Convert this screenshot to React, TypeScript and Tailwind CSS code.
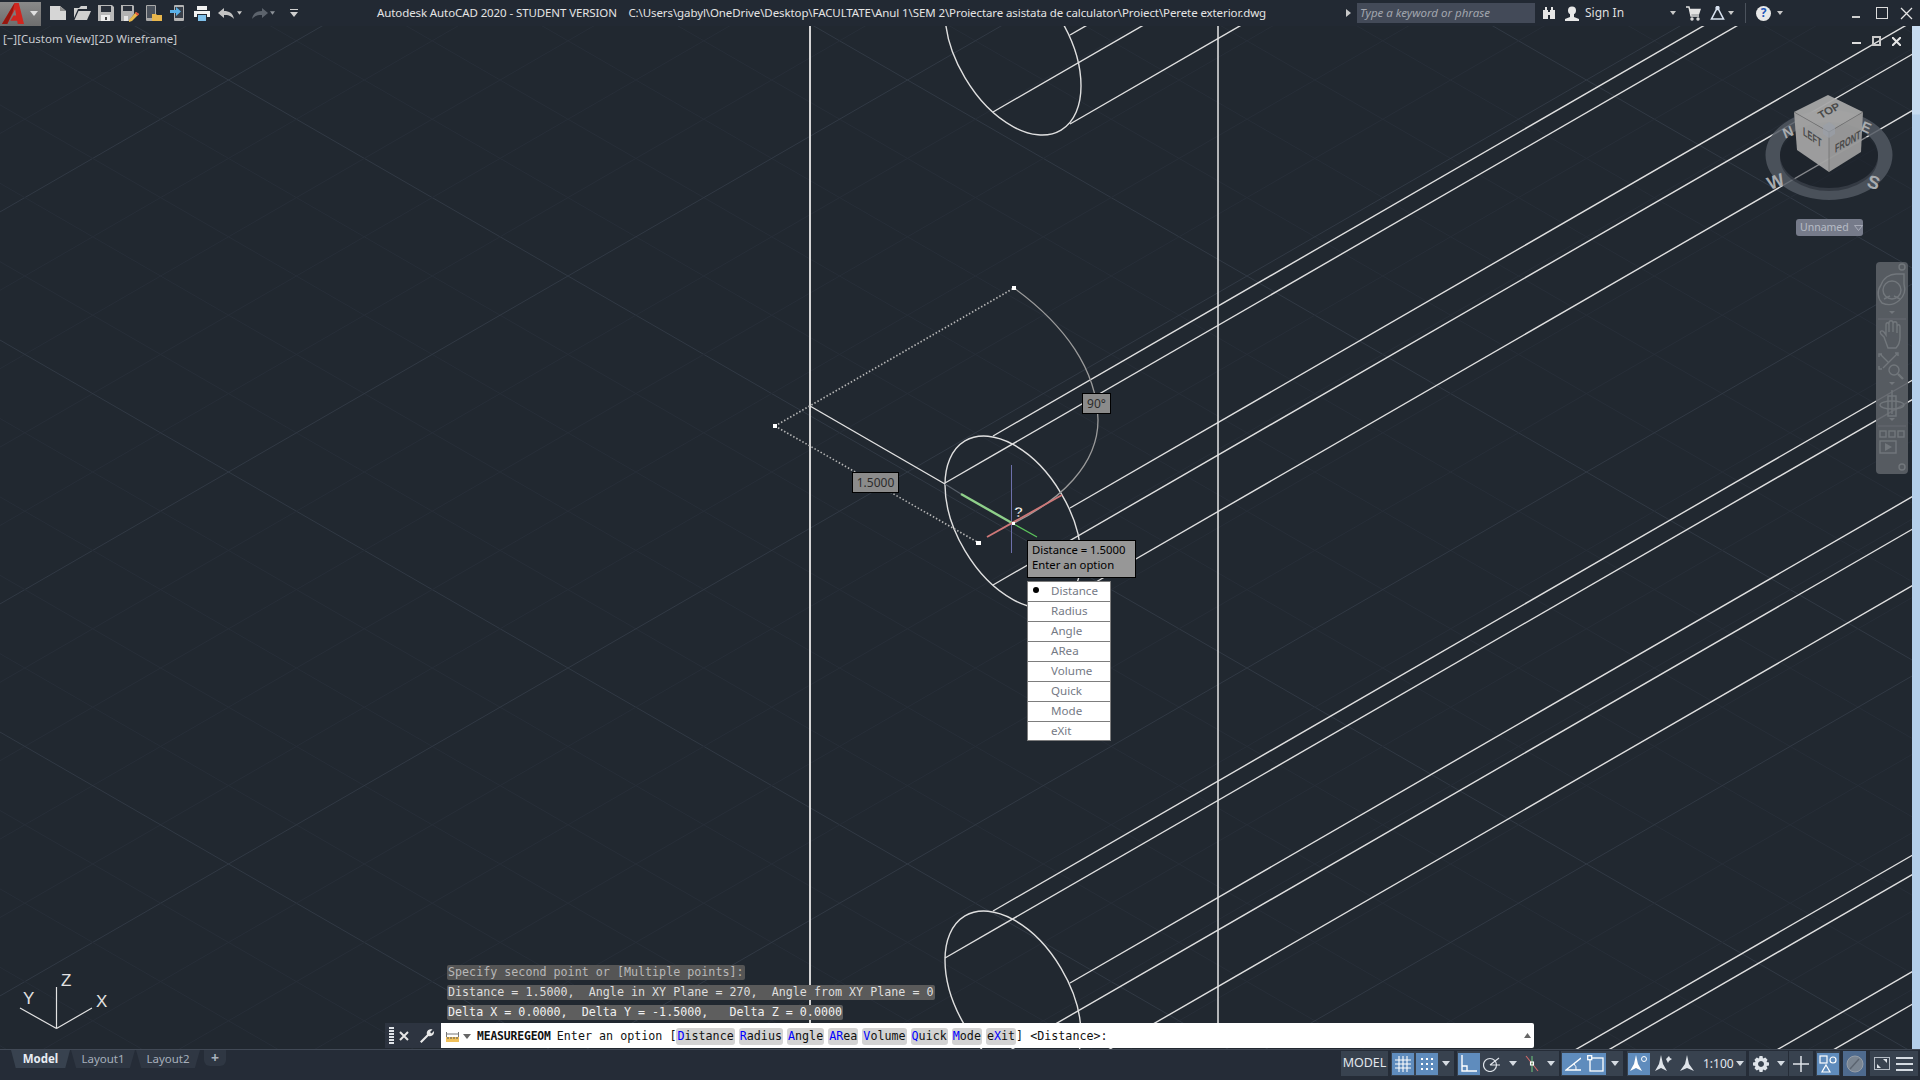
import React from 'react';

const UI = { fontFamily: '"Noto Sans", "Open Sans", sans-serif' };
const MONO = { fontFamily: '"DejaVu Sans Mono", "Liberation Mono", monospace' };

const SLOPE = Math.tan(Math.PI / 6);

// drafting grid, major every 5th line
function gridLines() {
  const out: React.ReactNode[] = [];
  const baseY = 472 - 228.5 * SLOPE;
  const baseY2 = 472 + 228.5 * SLOPE;
  for (let i = -30; i < 60; i++) {
    const major = i % 5 === 0;
    const stroke = major ? '#313944' : '#272e38';
    const a = baseY + i * 78.4;
    const b = baseY2 + i * 78.4;
    out.push(<line key={`a${i}`} x1={0} y1={a} x2={1920} y2={a + 1920 * SLOPE} stroke={stroke} strokeWidth={1} />);
    out.push(<line key={`b${i}`} x1={0} y1={b} x2={1920} y2={b - 1920 * SLOPE} stroke={stroke} strokeWidth={1} />);
  }
  return out;
}

const centers = [49, 522, 997, 1472];
const starts: [number, number][] = [[-20, -86], [-68, -39], [57, -14], [-20, 63], [57, 75]];

function Pipes() {
  return (
    <g stroke="#e0e0e0" strokeWidth={1.4} fill="none">
      {centers.map(cy => (
        <g key={cy}>
          {cy < 1400 && (
            <ellipse cx={0} cy={0} rx={1} ry={1} transform={`matrix(68 37 0 77.6 1013 ${cy})`} vectorEffect="non-scaling-stroke" />
          )}
          {starts.map(([dx, dy], i) => {
            const x = 1013 + dx;
            const y = cy + dy;
            return <line key={i} x1={x} y1={y} x2={1914} y2={y - (1914 - x) * SLOPE} />;
          })}
        </g>
      ))}
    </g>
  );
}

function Drawing() {
  return (
    <svg className="absolute inset-0" width={1920} height={1023} viewBox="0 26 1920 1023">
      {gridLines()}
      <Pipes />
      <line x1={810} y1={26} x2={810} y2={1023} stroke="#d4d4d4" strokeWidth={2} />
      <line x1={1218} y1={26} x2={1218} y2={1023} stroke="#e4e4e4" strokeWidth={1.5} />
      <line x1={810} y1={406} x2={945} y2={484} stroke="#e2e2e2" strokeWidth={1.4} />
      <line x1={945} y1={484} x2={961} y2={494} stroke="#59606a" strokeWidth={1.2} />
      <path d="M775 426 L1014 288 M775 426 L979 543" stroke="#b5b5b5" strokeWidth={1.6} strokeDasharray="1.5 2" fill="none" />
      <path d="M1014 288 C1065 325 1097 370 1098 420 C1098 465 1060 500 1014 523" stroke="#9b9b9b" strokeWidth={1.3} fill="none" />
      <rect x={1012} y={286} width={4} height={4} fill="#fff" />
      <rect x={773} y={424} width={4} height={4} fill="#fff" />
      <rect x={976} y={541} width={5} height={4} fill="#fff" />
      {/* crosshair */}
      <line x1={1011.5} y1={465} x2={1011.5} y2={553} stroke="#6d70ab" strokeWidth={1} />
      <line x1={961} y1={494} x2={1012} y2={523} stroke="#8fd08a" strokeWidth={2.4} />
      <line x1={1012} y1={523} x2={1037} y2={537} stroke="#5cc45c" strokeWidth={1.2} />
      <line x1={1062} y1={495} x2={987} y2={537} stroke="#cf7878" strokeWidth={1.8} />
      <rect x={1012} y={522} width={3} height={3} fill="#fff" />
      <text x={1014} y={517} fontSize={15} fontWeight={700} fill="#fff" stroke="#000" strokeWidth={0.4} style={{ fontFamily: '"Liberation Sans", sans-serif' }}>?</text>
      {/* UCS */}
      <path d="M56.500 1028.500 L56.500 987 M56.500 1028.500 L20 1008 M56.500 1028.500 L92 1008" stroke="#e2e2e2" strokeWidth={1.2} fill="none" />
      <g fill="#e2e2e2" fontSize={17} style={{ fontFamily: '"Liberation Sans", sans-serif' }}>
        <text x={61} y={986}>Z</text>
        <text x={23} y={1004}>Y</text>
        <text x={96} y={1007}>X</text>
      </g>
    </svg>
  );
}

function ViewCube() {
  const faceFont = { fontFamily: '"Liberation Sans", sans-serif' };
  return (
    <svg className="absolute left-[1760px] top-[60px]" width={140} height={130} viewBox="1760 86 140 130">
      <path fillRule="evenodd" d="M1765.500 155 a63.500 45 0 1 0 127 0 a63.500 45 0 1 0 -127 0 Z M1780 155 a49 33 0 1 0 98 0 a49 33 0 1 0 -98 0 Z" fill="#515861" fillOpacity={0.85} />
      <ellipse cx={1829} cy={158} rx={49} ry={33} fill="#1b2027" fillOpacity={0.45} />
      <g fill="#a9acaf" fontWeight={700} style={faceFont}>
        <text fontSize={19} transform="matrix(.88 -.3 .35 .9 1770 190)">W</text>
        <text fontSize={19} transform="matrix(.9 .35 -.3 .9 1866 186)">S</text>
        <text fontSize={15} transform="matrix(.88 -.4 .35 .9 1785 139)">N</text>
        <text fontSize={15} transform="matrix(.88 .4 -.35 .9 1860 130)">E</text>
      </g>
      <g fillOpacity={0.95}>
        <path d="M1828 95 L1863 112 L1829 132 L1794 112 Z" fill="#a7a7a7" />
        <path d="M1794 112 L1829 132 L1829 172 L1797 150 Z" fill="#a3a3a3" />
        <path d="M1863 112 L1861 152 L1829 172 L1829 132 Z" fill="#9c9c9c" />
      </g>
      <path d="M1794 112 L1829 132 L1863 112 M1829 132 L1829 172" stroke="#6f6f6f" strokeWidth={0.7} fill="none" />
      <path d="M1823 126 L1829 122 L1835 126 L1835 134 L1829 138 L1823 134 Z" fill="#9aa0a8" fillOpacity={0.7} />
      <g fill="#4a4a4a" fontWeight={700} style={faceFont}>
        <text fontSize={11} transform="matrix(.9 -.48 .55 .8 1821 119)">TOP</text>
        <text fontSize={12} transform="matrix(.62 .42 0 1 1803 135)">LEFT</text>
        <text fontSize={12} transform="matrix(.62 -.36 0 1 1835 153)">FRONT</text>
      </g>
    </svg>
  );
}

function NavBar() {
  return (
    <div className="absolute left-[1876px] top-[236px] w-[32px] h-[212px] rounded-[4px] bg-[#5c6167]/90 flex flex-col items-center">
      <svg width={32} height={212} viewBox="0 0 32 212" fill="none" stroke="#72777c" strokeWidth={1.4}>
        <circle cx={26} cy={5} r={3} />
        <path d="M5 23 a16 16 0 0 1 16 -11 h7 v10 a16 16 0 0 1 -22 19 a14 14 0 0 1 -1 -18 Z" />
        <circle cx={16} cy={28} r={9} />
        <path d="M8 37 l6 -3 M24 37 l-6 -3" />
        <path d="M13 49 l3 3 l3 -3 Z" fill="#72777c" stroke="none" />
        <line x1={2} y1={57} x2={30} y2={57} strokeWidth={0.6} />
        <path d="M8 75 l-3 -3 c-2 -3 1 -4 3 -2 l2 3 v-10 c0 -3 3 -3 3 0 v7 v-9 c0 -3 4 -3 4 0 v9 v-8 c0 -3 4 -3 4 0 v9 v-6 c0 -3 3 -3 3 0 v10 c0 6 -2 9 -4 11 h-8 Z" />
        <path d="M4 92 l8 8 M21 92 l-14 14 M6 92 h-3 v3 M19 91 h3 v3 M3 104 v3 h3" />
        <circle cx={18} cy={108} r={5} />
        <path d="M22 112 l5 5" strokeWidth={2.4} />
        <path d="M13 120 l3 3 l3 -3 Z" fill="#72777c" stroke="none" />
        <path d="M16 128 v24 M12 134 h8 v20 h-8 Z" />
        <ellipse cx={16} cy={143} rx={12} ry={4} />
        <path d="M13 156 l3 3 l3 -3 Z" fill="#72777c" stroke="none" />
        <line x1={2} y1={164} x2={30} y2={164} strokeWidth={0.6} />
        <rect x={4} y={169} width={6} height={6} />
        <rect x={13} y={169} width={6} height={6} />
        <rect x={22} y={169} width={6} height={6} />
        <rect x={4} y={179} width={16} height={12} />
        <path d="M9 181 l7 4 l-7 4 Z" fill="#72777c" stroke="none" />
        <circle cx={26} cy={205} r={3} />
      </svg>
    </div>
  );
}

const menuItems = ['Distance', 'Radius', 'Angle', 'ARea', 'Volume', 'Quick', 'Mode', 'eXit'];

function DynamicInput() {
  return (
    <>
      <div className="absolute left-[852px] top-[446px] w-[47px] h-[21px] bg-[#8b8b8b] border border-black flex items-center justify-center text-[12px] text-[#2b2b2b]" style={UI}>1.5000</div>
      <div className="absolute left-[1082px] top-[367px] w-[29px] h-[21px] bg-[#8b8b8b] border border-black flex items-center justify-center text-[12px] text-[#2b2b2b]" style={UI}>90°</div>
      <div className="absolute left-[1027px] top-[514px] w-[109px] h-[38px] bg-[#979797] border border-black pl-[4px] text-[11.3px] leading-[15px] pt-[1px] text-black" style={UI}>
        <div>Distance = 1.5000</div>
        <div>Enter an option</div>
      </div>
      <div className="absolute left-[1027px] top-[555px] w-[84px] bg-white border border-[#7d7d7d] text-[11.6px] text-[#757a85]" style={UI}>
        {menuItems.map((item, i) => (
          <div key={item} className={`relative pl-[23px] pb-[1px] flex items-center ${i < menuItems.length - 1 ? 'h-[20px] border-b border-[#7d7d7d]' : 'h-[18px]'}`}>
            {i === 0 && <span className="absolute left-[5px] top-[5px] w-[6px] h-[6px] rounded-full bg-black" />}
            {item}
          </div>
        ))}
      </div>
    </>
  );
}

const Opt = ({ hot, pre = '', rest = '' }: { hot: string; pre?: string; rest?: string }) => (
  <span className="inline-block h-[17px] leading-[17px] px-[1px] mr-[4px] bg-[#d3d3d3] rounded-[3px]">
    {pre}<span className="text-[#0000ff]">{hot}</span>{rest}
  </span>
);

function CommandLine() {
  return (
    <div className="absolute left-[385px] bottom-[1px] w-[1149px] flex flex-col" style={MONO}>
      <div className="pl-[62px] flex flex-col gap-[5px] text-[11.7px] leading-[15px] mb-[3px]">
        <div className="w-fit pr-[1px] pl-[1px] rounded-[2px] bg-[#555555] text-[#b8b8b8] whitespace-pre">Specify second point or [Multiple points]:</div>
        <div className="w-fit pr-[1px] pl-[1px] rounded-[2px] bg-[#5a5a5a] text-[#dedede] whitespace-pre">Distance = 1.5000,  Angle in XY Plane = 270,  Angle from XY Plane = 0</div>
        <div className="w-fit pr-[1px] pl-[1px] rounded-[2px] bg-[#5e5e5e] text-[#f0f0f0] whitespace-pre">Delta X = 0.0000,  Delta Y = -1.5000,   Delta Z = 0.0000</div>
      </div>
      <div className="flex h-[25px]">
        <div className="w-[56px] bg-[#2d3440] flex items-center relative">
          <div className="ml-[4px] w-[5px] h-[17px] bg-[repeating-linear-gradient(0deg,#dfe3e8_0px,#dfe3e8_2px,transparent_2px,transparent_3px)]" />
          <svg className="ml-[4px]" width={12} height={12} viewBox="0 0 12 12" stroke="#e6e6e6" strokeWidth={2}><path d="M2 2 L10 10 M10 2 L2 10" /></svg>
          <svg className="ml-[9px]" width={16} height={16} viewBox="0 0 16 16" fill="#e8e8e8"><path d="M1 13.500 L8 6.500 C7 3 10 .5 13.500 1.500 L11 4 L12.500 5.500 L15 3 C15.500 6.500 13 9 9.500 8 L2.500 15 Z" /></svg>
        </div>
        <div className="flex-1 bg-white rounded-r-[2px] flex items-center relative pt-[2px] text-[11.7px] text-[#111] whitespace-pre">
          <svg className="ml-[5px]" width={13} height={10} viewBox="0 0 13 10">
            <path d="M.5 0 V6 M12.500 0 V6 M.5 2 H12.500" stroke="#777" strokeWidth={1} fill="none" />
            <rect x={0} y={5} width={13} height={5} fill="#f0c05a" />
            <path d="M2 5 v2 M5 5 v2 M8 5 v2 M11 5 v2" stroke="#555" />
          </svg>
          <svg className="ml-[4px]" width={8} height={5} viewBox="0 0 8 5" fill="#666"><path d="M0 0 H8 L4 5 Z" /></svg>
          <span className="ml-[6px] font-bold tracking-[-0.15px] text-[11.4px]">MEASUREGEOM</span>
          <span className="ml-[6px]">Enter an option [</span>
          <Opt hot="D" rest="istance" />
          <Opt hot="R" rest="adius" />
          <Opt hot="A" rest="ngle" />
          <Opt hot="AR" rest="ea" />
          <Opt hot="V" rest="olume" />
          <Opt hot="Q" rest="uick" />
          <Opt hot="M" rest="ode" />
          <span className="inline-block h-[17px] leading-[17px] px-[1px] bg-[#d3d3d3] rounded-[3px]">e<span className="text-[#0000ff]">X</span>it</span>
          <span>] &lt;Distance&gt;:</span>
          <svg className="absolute right-[3px] top-[10px]" width={7} height={5} viewBox="0 0 7 5" fill="#666"><path d="M3.500 0 L7 5 H0 Z" /></svg>
        </div>
      </div>
    </div>
  );
}

/* ---- quick access toolbar ---- */
const Tb = ({ children, w = 'w-[24px]' }: { children: React.ReactNode; w?: string }) => (
  <div className={`${w} h-[26px] flex items-center justify-center shrink-0`}>{children}</div>
);

const TinyCaret = ({ color = '#c9c9c9' }: { color?: string }) => (
  <svg width={6} height={4} viewBox="0 0 6 4" fill={color}><path d="M0 0 H6 L3 4 Z" /></svg>
);

function QuickAccess() {
  return (
    <div className="flex items-center shrink-0">
      <div className="w-[41px] h-[24px] mt-[1px] bg-[linear-gradient(#8a8a8a,#6e6e6e)] flex items-center relative">
        <svg className="ml-[2px]" width={22} height={21} viewBox="0 0 21 20">
          <path d="M0 20 L12 0 H16 L21 20 H15 L14.500 17 H8 L11 12 H13.500 L12.500 6 L5 20 Z" fill="#d0261f" />
          <path d="M0 20 L12 0 L10 9 L5 20 Z" fill="#96170f" />
        </svg>
        <svg className="ml-[6px]" width={8} height={5} viewBox="0 0 8 5" fill="#e0e0e0"><path d="M0 0 H8 L4 5 Z" /></svg>
      </div>
      <div className="w-[5px]" />
      <Tb><svg width={16} height={14} viewBox="0 0 16 14" fill="#d6d6d6"><path d="M0 0 H10 L16 5 V14 H0 Z" /><path d="M10 0 V5 H16" fill="#8f8f8f" /></svg></Tb>
      <Tb><svg width={17} height={14} viewBox="0 0 17 14" fill="#cfcfcf"><path d="M0 2 H5 L7 0 H13 V3 H4 L0 12 Z" /><path d="M4.500 5 H17 L13 14 H.5 Z" /></svg></Tb>
      <Tb><svg width={16} height={16} viewBox="0 0 16 16"><path d="M0 0 H14 L16 2 V16 H0 Z" fill="#b9b9b9" /><rect x={3} y={1} width={10} height={6} fill="#2a303a" /><rect x={3} y={10} width={9} height={6} fill="#eee" /><rect x={7} y={12} width={2} height={3} fill="#444" /></svg></Tb>
      <Tb><svg width={18} height={17} viewBox="0 0 18 17"><path d="M0 0 H12 L13 1 V9 L8 16 H0 Z" fill="#b3b3b3" /><rect x={2} y={1} width={9} height={5} fill="#2a303a" /><rect x={3} y={11} width={4} height={5} fill="#e6e6e6" /><path d="M8 15 L15 7 L18 9 L11 16 L8 17 Z" fill="#e8b94a" /><path d="M14 8 L15 7 L18 9 L16.500 11 Z" fill="#e0503a" /></svg></Tb>
      <Tb><svg width={16} height={16} viewBox="0 0 16 16"><rect x={0} y={0} width={10} height={16} rx={1} fill="#aaaaaa" /><rect x={1} y={1} width={8} height={12} fill="#4b525c" /><path d="M6 9 H10 L11 10 H16 V16 H6 Z" fill="#e8b64c" /></svg></Tb>
      <Tb><svg width={16} height={16} viewBox="0 0 16 16"><rect x={4} y={0} width={10} height={16} rx={1} fill="#b3b3b3" /><rect x={5} y={2} width={8} height={11} fill="#39404a" /><path d="M0 5 H6 V2 L11 6.500 L6 11 V8 H0 Z" fill="#59b0e8" /></svg></Tb>
      <Tb><svg width={16} height={15} viewBox="0 0 16 15"><rect x={3} y={0} width={10} height={4} fill="#f2f2f2" /><path d="M0 5 H16 V11 H13 V8 H3 V11 H0 Z" fill="#f2f2f2" /><rect x={4} y={9} width={8} height={6} fill="#7fc0ea" /></svg></Tb>
      <Tb><svg width={16} height={11} viewBox="0 0 16 11" fill="#c3c3c3"><path d="M0 5 L6 0 V3 C11 3 15 5 16 11 C13 7.500 10 7 6 7 V10 Z" /></svg></Tb>
      <div className="w-[5px] flex justify-center -ml-[1px]"><TinyCaret /></div>
      <div className="w-[6px]" />
      <Tb><svg width={16} height={11} viewBox="0 0 16 11" fill="#5c636c"><path d="M16 5 L10 0 V3 C5 3 1 5 0 11 C3 7.500 6 7 10 7 V10 Z" /></svg></Tb>
      <div className="w-[5px] flex justify-center -ml-[2px]"><TinyCaret color="#8d9298" /></div>
      <div className="w-[15px]" />
      <svg width={8} height={8} viewBox="0 0 8 8" fill="#cfcfcf"><path d="M0 0 H8 V1 H0 Z M0 3 H8 L4 8 Z" /></svg>
    </div>
  );
}

function TopBar() {
  return (
    <div className="h-[26px] bg-[#222933] flex items-center shrink-0 relative z-10 text-[#e4e4e4]" style={UI}>
      <QuickAccess />
      <div className="ml-[79px] text-[11.5px] whitespace-pre tracking-[-0.1px]">
        Autodesk AutoCAD 2020 - STUDENT VERSION{'    '}C:\Users\gabyl\OneDrive\Desktop\FACULTATE\Anul 1\SEM 2\Proiectare asistata de calculator\Proiect\Perete exterior.dwg
      </div>
      <div className="flex-1" />
      <svg width={5} height={8} viewBox="0 0 5 8" fill="#c9c9c9"><path d="M0 0 L5 4 L0 8 Z" /></svg>
      <div className="ml-[6px] w-[178px] h-[20px] bg-[#434a58] pl-[3px] flex items-center text-[11.5px] italic text-[#a2a6ae]">Type a keyword or phrase</div>
      <svg className="ml-[7px]" width={14} height={14} viewBox="0 0 14 14" fill="#e6e6e6"><path d="M1 4 H6 V13 H1 Z M8 4 H13 V13 H8 Z M6 6 H8 V9 H6 Z M3 1 H5 V4 H3 Z M9 1 H11 V4 H9 Z" /></svg>
      <svg className="ml-[9px]" width={14} height={15} viewBox="0 0 14 15" fill="#e8e8e8"><circle cx={7} cy={4.500} r={4} /><path d="M5 8 H9 V11 L14 13 V15 H0 V13 L5 11 Z" /></svg>
      <span className="ml-[6px] w-[37px] text-[12px] whitespace-nowrap text-[#dfdfdf]">Sign In</span>
      <div className="ml-[48px]"><TinyCaret /></div>
      <svg className="ml-[10px]" width={15} height={15} viewBox="0 0 15 15" fill="none" stroke="#e2e2e2" strokeWidth={1.4}><path d="M0 1 H3 L5 10 H13" /><path d="M3.500 3.500 H14 L12.500 8 H4.500" fill="#e2e2e2" /><circle cx={6} cy={13} r={1} /><circle cx={12} cy={13} r={1} /></svg>
      <svg className="ml-[9px]" width={15} height={15} viewBox="0 0 15 15" fill="none" stroke="#d8e2f0" strokeWidth={1.6}><path d="M7.500 1.500 L13.500 13 H1.500 Z" /><circle cx={7.500} cy={2} r={1.4} fill="#d8e2f0" /></svg>
      <div className="ml-[3px]"><TinyCaret /></div>
      <div className="ml-[11px] w-px h-[20px] bg-[#4b525c]" />
      <div className="ml-[10px] w-[15px] h-[15px] rounded-full bg-[#e8e8e8] flex items-center justify-center text-[12px] leading-none font-bold text-[#2256b8]">?</div>
      <div className="ml-[6px]"><TinyCaret /></div>
      <svg className="ml-[69px] mt-[8px]" width={8} height={2} viewBox="0 0 8 2" fill="#cfcfcf"><rect width={8} height={2} /></svg>
      <div className="ml-[16px] w-[12px] h-[12px] border border-[#dcdcdc]" />
      <svg className="ml-[12px] mr-[7px]" width={13} height={13} viewBox="0 0 13 13" stroke="#e6e6e6" strokeWidth={1.3}><path d="M1 1 L12 12 M12 1 L1 12" /></svg>
    </div>
  );
}

/* ---- status bar ---- */
const ST = '#dfe4ea';

const Btn = ({ active, children, w = 'w-[22px]' }: { active?: boolean; children?: React.ReactNode; w?: string }) => (
  <div className={`${w} h-[22px] flex items-center justify-center shrink-0 ${active ? 'bg-[#5f8cbd]' : ''}`}>{children}</div>
);

const Group = ({ w, children }: { w: string; children: React.ReactNode }) => (
  <div className={`${w} h-[25px] bg-[#38424f] flex items-center shrink-0 px-[1px]`}>{children}</div>
);

const SCaret = () => (
  <div className="w-[18px] flex justify-center shrink-0">
    <svg width={8} height={5} viewBox="0 0 8 5" fill="#d5dbe2"><path d="M0 0 H8 L4 5 Z" /></svg>
  </div>
);

function Tab({ label, active, w }: { label: string; active?: boolean; w: string }) {
  return (
    <div className={`${w} h-[18px] flex items-center justify-center text-[11.5px] [clip-path:polygon(0_0,100%_0,92%_100%,8%_100%)] ${active ? 'bg-[#38424f] font-bold text-[#e8edf3]' : 'bg-[#2f3743] text-[#a6afbb]'}`}>
      {label}
    </div>
  );
}

function StatusBar() {
  return (
    <div className="h-[31px] bg-[#252c37] border-t border-[#414955] shrink-0 flex items-start relative z-10" style={UI}>
      <div className="flex items-start pl-[11px] gap-[1px]">
        <Tab label="Model" active w="w-[59px]" />
        <Tab label="Layout1" w="w-[64px]" />
        <Tab label="Layout2" w="w-[64px]" />
        <div className="w-[22px] h-[16px] ml-[3px] bg-[#2f3743] rounded-b-[6px] flex items-center justify-center text-[14px] leading-none font-bold text-[#aab2bd]">+</div>
      </div>
      <div className="flex-1" />
      <div className="flex items-center mt-[1px] mr-[2px] text-[#e2e7ed]">
        <div className="w-[47px] h-[25px] bg-[#38424f] flex items-center justify-center text-[12.5px] shrink-0">MODEL</div>
        <div className="ml-[3px]">
          <Group w="w-[63px]">
            <Btn active><svg width={16} height={16} viewBox="0 0 16 16" stroke="#fff" strokeWidth={1.1}><path d="M4 0 V16 M8 0 V16 M12 0 V16 M0 4 H16 M0 8 H16 M0 12 H16" /></svg></Btn>
            <div className="w-[2px] shrink-0" />
            <Btn active><svg width={14} height={14} viewBox="0 0 14 14" fill="#fff"><path d="M1 1h2v2H1z M6 1h2v2H6z M11 1h2v2h-2z M1 6h2v2H1z M6 6h2v2H6z M11 6h2v2h-2z M1 11h2v2H1z M6 11h2v2H6z M11 11h2v2h-2z" /></svg></Btn>
            <div className="w-[16px] flex justify-center shrink-0">
              <svg width={8} height={5} viewBox="0 0 8 5" fill="#d5dbe2"><path d="M0 0 H8 L4 5 Z" /></svg>
            </div>
          </Group>
        </div>
        <div className="ml-[3px]">
          <Group w="w-[102px]">
            <Btn active><svg width={16} height={17} viewBox="0 0 16 17" fill="none" stroke="#fff" strokeWidth={1.4}><path d="M1 0 V16 H16" /><path d="M1 11 H6 V16" /></svg></Btn>
            <Btn w="w-[24px]"><svg width={18} height={16} viewBox="0 0 18 16" fill="none" stroke={ST} strokeWidth={1.2}><circle cx={7} cy={9} r={6.500} /><path d="M7 9 L16 2 M7 9 H17" /></svg></Btn>
            <SCaret />
            <Btn w="w-[20px]"><svg width={16} height={18} viewBox="0 0 16 18" fill="none" strokeWidth={1.1}><path d="M2 1 L14 16" stroke="#d56a6a" /><path d="M8 1 V17" stroke="#6bbf78" /><rect x={6.500} y={7} width={3} height={3} stroke="#fff" /></svg></Btn>
            <SCaret />
          </Group>
        </div>
        <div className="ml-[2px]">
          <Group w="w-[62px]">
            <Btn active><svg width={16} height={14} viewBox="0 0 16 14" fill="none" stroke="#fff" strokeWidth={1.4}><path d="M16 1 L1 13 H16" /><path d="M9 7 A6 6 0 0 1 11 13" strokeWidth={1} /></svg></Btn>
            <div className="w-[2px]" />
            <Btn active><svg width={17} height={17} viewBox="0 0 17 17" fill="none" stroke="#fff" strokeWidth={1.3}><rect x={3} y={3} width={13} height={13} /><rect x={.7} y={.7} width={4} height={4} fill="#5f8cbd" /></svg></Btn>
            <SCaret />
          </Group>
        </div>
        <div className="ml-[4px]">
          <Group w="w-[119px]">
            <Btn active><svg width={18} height={18} viewBox="0 0 18 18" fill="#fff"><path d="M6 0 L8 9 L12 16 L6 13 L0 16 L4 9 Z" /><circle cx={14} cy={4} r={2.500} fill="none" stroke="#fff" /></svg></Btn>
            <Btn w="w-[25px]"><svg width={18} height={18} viewBox="0 0 18 18" fill={ST}><path d="M7 0 L9 9 L13 16 L7 13 L1 16 L5 9 Z" /><path d="M12 4 L15 1 L16 3 L18 4 L15 6 L14 8 Z" /></svg></Btn>
            <Btn w="w-[24px]"><svg width={16} height={17} viewBox="0 0 16 17" fill={ST}><path d="M8 0 L10 9 L15 16 L8 13 L1 16 L6 9 Z" /></svg></Btn>
            <span className="ml-[4px] text-[12px] w-[28px] shrink-0">1:100</span>
            <SCaret />
          </Group>
        </div>
        <div className="ml-[3px]">
          <Group w="w-[39px]">
            <Btn><svg width={16} height={16} viewBox="0 0 16 16" fill={ST}><path fillRule="evenodd" d="M6.500 0 H9.500 L10 2.500 L12.300 1.500 L14.500 3.700 L13.500 6 L16 6.500 V9.500 L13.500 10 L14.500 12.300 L12.300 14.500 L10 13.500 L9.500 16 H6.500 L6 13.500 L3.700 14.500 L1.500 12.300 L2.500 10 L0 9.500 V6.500 L2.500 6 L1.500 3.700 L3.700 1.500 L6 2.500 Z M8 5 a3 3 0 1 0 .01 0 Z" /></svg></Btn>
            <SCaret />
          </Group>
        </div>
        <div className="ml-[1px]">
          <Group w="w-[24px]">
            <Btn><svg width={16} height={16} viewBox="0 0 16 16" stroke={ST} strokeWidth={1.5}><path d="M8 0 V16 M0 8 H16" /></svg></Btn>
          </Group>
        </div>
        <div className="ml-[3px]">
          <Group w="w-[24px]">
            <Btn active><svg width={18} height={18} viewBox="0 0 18 18" fill="none" stroke="#fff" strokeWidth={1.2}><rect x={1} y={1} width={7} height={7} /><circle cx={14} cy={5} r={3} /><path d="M7 10 L11 17 H3 Z" /></svg></Btn>
          </Group>
        </div>
        <div className="ml-[3px] w-[23px] h-[25px] bg-[#4e6a8e] flex items-center justify-center shrink-0">
          <svg width={18} height={18} viewBox="0 0 18 18" fill="none"><circle cx={9} cy={9} r={8} fill="#7a8592" stroke="#969ea8" /><path d="M4 14 L13 4" stroke="#5b6470" strokeWidth={1.4} /></svg>
        </div>
        <div className="ml-[4px] w-[48px] h-[25px] bg-[#38424f] flex items-center shrink-0">
          <div className="ml-[4px] w-[16px] h-[13px] border border-[#b5bcc5] flex items-center justify-center">
            <svg width={12} height={9} viewBox="0 0 12 9" fill={ST}><path d="M1 9 L1 5 L5 9 Z M11 0 V4 L7 0 Z" /></svg>
          </div>
          <div className="ml-[6px] w-[17px] h-[14px] flex flex-col justify-between">
            <div className="h-[2px] bg-[#d5dbe2]" />
            <div className="h-[2px] bg-[#d5dbe2]" />
            <div className="h-[2px] bg-[#d5dbe2]" />
          </div>
        </div>
      </div>
    </div>
  );
}

export default function App() {
  return (
    <div className="w-[1920px] h-[1080px] overflow-hidden flex flex-col bg-[#212830]">
      <TopBar />
      <div className="relative flex-1 overflow-hidden">
        <Drawing />
        <div className="absolute left-[3px] top-[5px] text-[11.5px] leading-[16px] text-[#c9ccd0]" style={UI}>[−][Custom View][2D Wireframe]</div>
        <div className="absolute right-[15px] top-[10px] flex items-center gap-[11px] text-[#d8d8d8]">
          <div className="w-[9px] h-[2px] bg-[#dcdcdc] mt-[3px]" />
          <div className="w-[9px] h-[10px] border-2 border-[#c9c9c9]" />
          <svg className="mr-[4px]" width={9} height={9} viewBox="0 0 9 9" stroke="#e6e6e6" strokeWidth={2}><path d="M0 0 L9 9 M9 0 L0 9" /></svg>
        </div>
        <ViewCube />
        <div className="absolute left-[1796px] top-[193px] w-[67px] h-[17px] rounded-[3px] bg-[#767b8a] flex items-center pl-[4px] text-[10.5px] text-[#b7bbc5]" style={UI}>
          Unnamed
          <svg className="ml-[5px]" width={9} height={6} viewBox="0 0 9 6" fill="none" stroke="#a8acb8"><path d="M.5 .5 H8.500 L4.500 5.500 Z" /></svg>
        </div>
        <NavBar />
        <DynamicInput />
        <CommandLine />
        <div className="absolute right-0 top-0 bottom-0 w-[8px] bg-[linear-gradient(#c7dcf1_0,#c7dcf1_88px,#b4cfea_89px)]" />
      </div>
      <StatusBar />
    </div>
  );
}
